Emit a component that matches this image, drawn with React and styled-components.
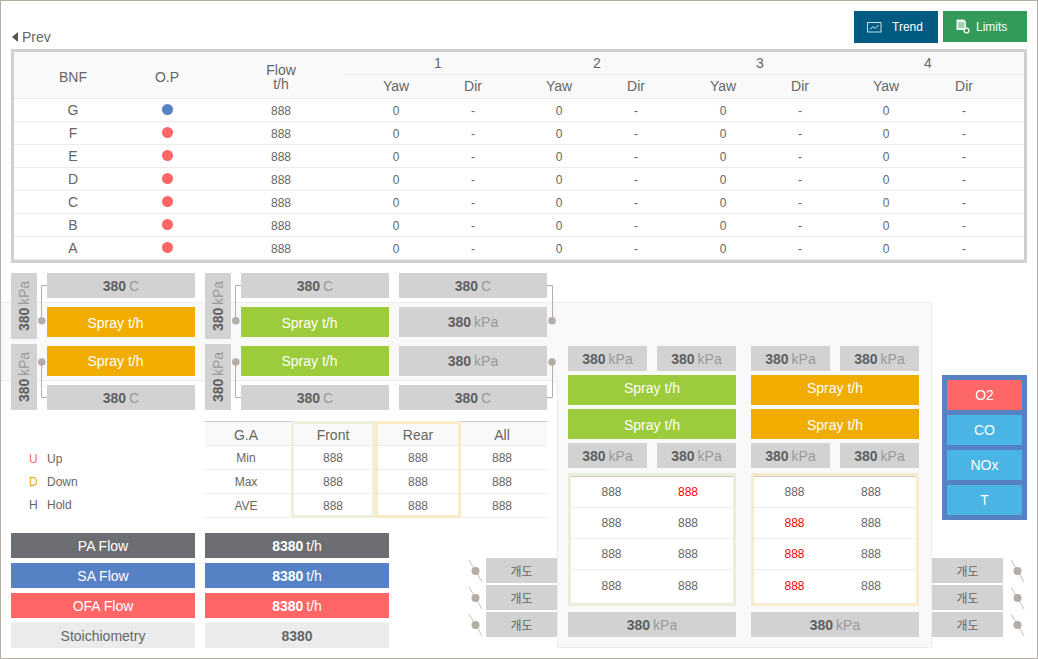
import React from "react";
import styled, { createGlobalStyle } from "styled-components";

const Global = createGlobalStyle`
  html, body { margin: 0; padding: 0; background: #fff; }
  body { font-family: "Liberation Sans", Arial, "Noto Sans CJK KR", sans-serif; color: #666; }
  * { box-sizing: border-box; }
`;

const C = {
  frame: "#b5aea6",
  box: "#d2d2d2",
  orange: "#f0ac00",
  green: "#9ccc3c",
  blue: "#5681c4",
  red: "#ff6666",
  sky: "#4ab4e4",
  dark: "#6d6e71",
  line: "#ececec",
  soft: "#f9f9f9",
};

const Page = styled.div`
  width: 1038px;
  height: 659px;
  border: 1px solid ${C.frame};
  overflow: hidden;
`;

const TopBar = styled.div`
  height: 48px;
  padding: 10px 10px 0;
  display: flex;
  align-items: flex-start;
`;
const Prev = styled.div`
  margin-top: 18px;
  padding-left: 1px;
  display: flex;
  align-items: center;
  gap: 4px;
  font-size: 14px;
  line-height: 16px;
  color: #666;
  &::before {
    content: "";
    border-style: solid;
    border-width: 5px 6px 5px 0;
    border-color: transparent #555 transparent transparent;
  }
`;
const Buttons = styled.div`
  margin-left: auto;
  display: flex;
  gap: 5px;
`;
const ActionButton = styled.div`
  width: 84px;
  height: ${(p) => p.$h}px;
  background: ${(p) => p.$bg};
  color: #fff;
  font-size: 12px;
  display: flex;
  align-items: center;
  padding-left: ${(p) => p.$pad}px;
  gap: ${(p) => p.$gap}px;
`;

const Table = styled.div`
  margin: 0 10px;
  border: 3px solid #d0d0d0;
  height: 214px;
`;
const cols = "118px 70px 158px 72px 82px 90px 64px 110px 44px 128px 28px 46px";
const Head = styled.div`
  display: grid;
  grid-template-columns: ${cols};
  grid-template-rows: 23px 23px;
  height: 47px;
  background: ${C.soft};
  border-bottom: 1px solid ${C.line};
  font-size: 14px;
`;
const HeadSpan = styled.div`
  grid-row: 1 / 3;
  display: flex;
  align-items: center;
  justify-content: center;
  text-align: center;
  line-height: 14px;
  padding-top: 4px;
`;
const GroupRow = styled.div`
  grid-column: 4 / -1;
  grid-row: 1;
  margin-left: -16px;
  display: grid;
  grid-template-columns: 188px 130px 196px 140px 26px;
  border-bottom: 1px solid ${C.line};
  align-items: center;
  text-align: center;
  height: 23px;
`;
const SubHead = styled.div`
  grid-row: 2;
  grid-column: ${(p) => p.$col};
  text-align: center;
  line-height: 23px;
`;
const Row = styled.div`
  display: grid;
  grid-template-columns: ${cols};
  height: 23px;
  padding-top: 1px;
  border-bottom: 1px solid ${C.line};
  align-items: center;
  text-align: center;
  font-size: 12px;
`;
const RowName = styled.div`
  font-size: 14px;
  margin-top: -2px;
`;
const Dot = styled.span`
  display: block;
  width: 11px;
  height: 11px;
  border-radius: 50%;
  margin: -3px auto 0;
  background: ${(p) => p.$c};
`;

const Lower = styled.div`
  margin-top: 10px;
  padding-left: 10px;
  display: flex;
  align-items: flex-start;
  height: 375px;
  background:
    linear-gradient(${C.line}, ${C.line}) 0 29px / 556px 1px no-repeat,
    linear-gradient(${C.line}, ${C.line}) 0 107px / 556px 1px no-repeat,
    linear-gradient(${C.soft}, ${C.soft}) 0 29px / 556px 79px no-repeat;
`;
const ColA = styled.div`
  width: 184px;
  margin-right: 10px;
`;
const ColB = styled.div`
  width: 352px;
`;
const Panel = styled.div`
  width: 375px;
  height: 346px;
  margin-top: 29px;
  padding: 43px 12px 0 11px;
  display: flex;
  gap: 15px;
  border: 1px solid ${C.line};
  border-left: 0;
  background:
    linear-gradient(${C.line}, ${C.line}) 0 78px / 1px 100% no-repeat,
    ${C.soft};
`;
const ColD = styled.div`
  width: 95px;
`;

const SprayGroup = styled.div`
  position: relative;
  display: flex;
  gap: 10px;
  height: 137px;
`;
const VStack = styled.div`
  width: 26px;
  display: flex;
  flex-direction: column;
  gap: 5px;
`;
const VBox = styled.div`
  height: 66px;
  background: ${C.box};
  display: flex;
  align-items: center;
  justify-content: center;
  writing-mode: vertical-rl;
  transform: rotate(180deg);
  font-size: 14px;
  color: #999;
  white-space: nowrap;
`;
const Stack = styled.div`
  width: 148px;
  display: flex;
  flex-direction: column;
  gap: 9px;
`;
const Metric = styled.div`
  height: ${(p) => p.$h || 25}px;
  width: ${(p) => (p.$w ? p.$w + "px" : "auto")};
  background: ${C.box};
  display: flex;
  align-items: center;
  justify-content: center;
  font-size: 14px;
  color: #999;
  white-space: nowrap;
`;
const Num = styled.b`
  color: #5f5f5f;
  margin-inline-end: 3px;
`;
const Spray = styled.div`
  height: 30px;
  background: ${(p) => p.$c};
  color: #fff;
  font-size: 14px;
  display: flex;
  align-items: center;
  justify-content: center;
  padding-bottom: ${(p) => p.$up || 0}px;
  padding-top: ${(p) => p.$down || 0}px;
  padding-right: ${(p) => p.$shift || 0}px;
`;
const Wires = styled.svg`
  position: absolute;
  left: 0;
  top: 0;
  overflow: visible;
  pointer-events: none;
`;

const Legend = styled.div`
  margin: 37px 0 0 18px;
  height: 86px;
  font-size: 12px;
`;
const LegendRow = styled.div`
  height: 23px;
  display: flex;
  align-items: center;
`;
const LegendKey = styled.span`
  width: 18px;
  font-size: 12px;
  color: ${(p) => p.$c};
`;

const FlowStack = styled.div`
  width: 184px;
  display: flex;
  flex-direction: column;
  gap: 5px;
`;
const Flow = styled.div`
  height: 25px;
  background: ${(p) => p.$bg};
  color: ${(p) => (p.$dim ? "#666" : "#fff")};
  font-size: 14px;
  display: flex;
  align-items: center;
  justify-content: center;
  white-space: pre;
`;
const FlowNum = styled.b`
  margin-inline-end: ${(p) => (p.$unit ? 3 : 0)}px;
`;

const GaTable = styled.div`
  margin-top: 11px;
  width: 342px;
  height: 97px;
  display: grid;
  grid-template-columns: 86px 84px 86px 86px;
`;
const GaCol = styled.div`
  position: relative;
  border-top: 1px solid #ccc;
  ${(p) =>
    p.$frame &&
    `&::after {
      content: "";
      position: absolute;
      inset: -1px 0 0;
      border: 3px solid ${p.$frame};
    }`}
`;
const GaHead = styled.div`
  height: 24px;
  font-size: 14px;
  text-align: center;
  line-height: 26px;
  padding-right: ${(p) => p.$pr || 0}px;
  background: ${C.soft};
  border-bottom: 1px solid ${C.line};
`;
const GaCell = styled.div`
  height: 24px;
  font-size: 12px;
  text-align: center;
  line-height: 24px;
  padding-right: ${(p) => p.$pr || 0}px;
  border-bottom: 1px solid ${C.line};
`;

const BottomB = styled.div`
  margin-top: 15px;
  display: flex;
  justify-content: space-between;
  align-items: flex-start;
`;
const GaugeList = styled.div`
  margin-top: ${(p) => p.$top || 0}px;
  display: flex;
  flex-direction: column;
  gap: 2px;
`;
const GaugeRow = styled.div`
  display: flex;
  align-items: center;
  gap: ${(p) => p.$gap}px;
`;
const GaugeBox = styled.div`
  width: 71px;
  height: 25px;
  background: ${C.box};
  font-size: 12px;
  color: #666;
  display: flex;
  align-items: center;
  justify-content: center;
  font-family: "Noto Sans CJK KR", sans-serif;
`;

const Side = styled.div`
  width: 168px;
  display: flex;
  flex-direction: column;
  gap: 4px;
`;
const Pair = styled.div`
  display: flex;
  justify-content: space-between;
`;
const Values = styled.div`
  margin: 1px 0 2px;
  height: 133px;
  border: 3px solid ${(p) => p.$c};
  background: #fff;
`;
const ValuesInner = styled.div`
  border-top: 1px solid #ccc;
`;
const ValueRow = styled.div`
  height: 31px;
  display: grid;
  grid-template-columns: 81px 72px;
  align-items: center;
  text-align: center;
  font-size: 12px;
  border-bottom: 1px solid ${C.line};
  &:last-child { border-bottom: 0; }
`;
const Val = styled.span`
  color: ${(p) => (p.$red ? "#ff0000" : "#666")};
`;

const GasBox = styled.div`
  margin: 102px 0 38px 10px;
  width: 85px;
  height: 145px;
  padding: 5px;
  background: ${C.blue};
  display: flex;
  flex-direction: column;
  gap: 5px;
`;
const Gas = styled.div`
  height: 30px;
  background: ${(p) => p.$c};
  color: #fff;
  font-size: 14px;
  display: flex;
  align-items: center;
  justify-content: center;
`;

const Val380 = ({ unit }) => (
  <>
    <Num>380</Num>
    {unit}
  </>
);

const Group = ({ color, extra }) => (
  <SprayGroup>
    <VStack>
      <VBox><Val380 unit="kPa" /></VBox>
      <VBox><Val380 unit="kPa" /></VBox>
    </VStack>
    <Stack>
      <Metric><Val380 unit="C" /></Metric>
      <Spray $c={color} $down={1} $shift={11}>Spray t/h</Spray>
      <Spray $c={color} $shift={11}>Spray t/h</Spray>
      <Metric><Val380 unit="C" /></Metric>
    </Stack>
    {extra && (
      <Stack>
        <Metric><Val380 unit="C" /></Metric>
        <Metric $h={30}><Val380 unit="kPa" /></Metric>
        <Metric $h={30}><Val380 unit="kPa" /></Metric>
        <Metric><Val380 unit="C" /></Metric>
      </Stack>
    )}
    <Wires width="10" height="137">
      <g fill="none" stroke={C.frame}>
        <path d="M36 12.5H30.5V47.5" />
        <path d="M36 124.5H30.5V89" />
        {extra && <path d="M342 12.5H347.5V47.5" />}
        {extra && <path d="M342 124.5H347.5V89" />}
      </g>
      <g fill={C.frame}>
        <circle cx="30.8" cy="47.7" r="3.8" />
        <circle cx="30.8" cy="89" r="3.8" />
        {extra && <circle cx="347" cy="47.7" r="3.8" />}
        {extra && <circle cx="347" cy="89" r="3.8" />}
      </g>
    </Wires>
  </SprayGroup>
);

const PinIcon = () => (
  <svg width="16" height="24" viewBox="0 0 16 24">
    <path d="M2 1L15 23" stroke={C.frame} strokeWidth="0.8" fill="none" />
    <circle cx="8.5" cy="12" r="4" fill={C.frame} />
  </svg>
);

const Gauges = ({ right, top }) => (
  <GaugeList $top={top}>
    {[0, 1, 2].map((i) => (
      <GaugeRow key={i} $gap={right ? 6 : 3}>
        {!right && <PinIcon />}
        <GaugeBox>개도</GaugeBox>
        {right && <PinIcon />}
      </GaugeRow>
    ))}
  </GaugeList>
);

const TrendIcon = () => (
  <svg width="15" height="11" viewBox="0 0 15 11" fill="none" stroke="#fff">
    <rect x="0.5" y="0.5" width="13.5" height="9.5" strokeOpacity="0.8" />
    <path d="M3 7.5L6 4.5L8 6.5L11.5 3" strokeOpacity="0.9" />
  </svg>
);
const LimitsIcon = () => (
  <svg width="14" height="15" viewBox="0 0 14 15">
    <path d="M0.5 0.5H8L10 2.5V11H0.5Z" fill="#fff" fillOpacity="0.9" />
    <path d="M2 4H8.5M2 6H8.5M2 8H8.5" stroke="#339a5a" strokeWidth="0.8" />
    <circle cx="10.5" cy="11.5" r="2.4" fill="#339a5a" stroke="#fff" strokeWidth="1.3" />
  </svg>
);

const rows = ["G", "F", "E", "D", "C", "B", "A"];
const gaRows = [
  ["G.A", "Min", "Max", "AVE"],
  ["Front", "888", "888", "888"],
  ["Rear", "888", "888", "888"],
  ["All", "888", "888", "888"],
];
const leftVals = [[0, 1], [0, 0], [0, 0], [0, 0]];
const rightVals = [[0, 0], [1, 0], [1, 0], [1, 0]];

const PanelSide = ({ color, frame, vals }) => (
  <Side>
    <Pair>
      <Metric $w={79}><Val380 unit="kPa" /></Metric>
      <Metric $w={79}><Val380 unit="kPa" /></Metric>
    </Pair>
    <Spray $c={color} $up={4}>Spray t/h</Spray>
    <Spray $c={color} $down={1}>Spray t/h</Spray>
    <Pair>
      <Metric $w={79}><Val380 unit="kPa" /></Metric>
      <Metric $w={79}><Val380 unit="kPa" /></Metric>
    </Pair>
    <Values $c={frame}>
      <ValuesInner>
        {vals.map((r, i) => (
          <ValueRow key={i}>
            <Val $red={r[0]}>888</Val>
            <Val $red={r[1]}>888</Val>
          </ValueRow>
        ))}
      </ValuesInner>
    </Values>
    <Metric><Val380 unit="kPa" /></Metric>
  </Side>
);

export default function App() {
  return (
    <Page>
      <Global />
      <TopBar>
        <Prev>Prev</Prev>
        <Buttons>
          <ActionButton $bg="#005b82" $h={32} $pad={13} $gap={10}><TrendIcon />Trend</ActionButton>
          <ActionButton $bg="#339a5a" $h={31} $pad={13} $gap={6}><LimitsIcon />Limits</ActionButton>
        </Buttons>
      </TopBar>
      <Table>
        <Head>
          <HeadSpan>BNF</HeadSpan>
          <HeadSpan>O.P</HeadSpan>
          <HeadSpan>Flow<br />t/h</HeadSpan>
          <GroupRow>
            <span>1</span><span>2</span><span>3</span><span>4</span>
          </GroupRow>
          {["Yaw", "Dir", "Yaw", "Dir", "Yaw", "Dir", "Yaw", "Dir"].map((t, i) => (
            <SubHead key={i} $col={i + 4}>{t}</SubHead>
          ))}
        </Head>
        {rows.map((r, i) => (
          <Row key={r}>
            <RowName>{r}</RowName>
            <div><Dot $c={i === 0 ? C.blue : C.red} /></div>
            <div>888</div>
            <div>0</div><div>-</div>
            <div>0</div><div>-</div>
            <div>0</div><div>-</div>
            <div>0</div><div>-</div>
          </Row>
        ))}
      </Table>
      <Lower>
        <ColA>
          <Group color={C.orange} />
          <Legend>
            <LegendRow><LegendKey $c={C.red}>U</LegendKey>Up</LegendRow>
            <LegendRow><LegendKey $c={C.orange}>D</LegendKey>Down</LegendRow>
            <LegendRow><LegendKey $c="#666">H</LegendKey>Hold</LegendRow>
          </Legend>
          <FlowStack>
            <Flow $bg={C.dark}>PA Flow</Flow>
            <Flow $bg={C.blue}>SA Flow</Flow>
            <Flow $bg={C.red}>OFA Flow</Flow>
            <Flow $bg="#ebebeb" $dim>Stoichiometry</Flow>
          </FlowStack>
        </ColA>
        <ColB>
          <Group color={C.green} extra />
          <GaTable>
            {gaRows.map((col, i) => {
              const pr = i === 0 || i === 3 ? 4 : 0;
              return (
                <GaCol key={i} $frame={i === 1 ? "#ebf1da" : i === 2 ? "#faebc8" : undefined}>
                  <GaHead $pr={pr}>{col[0]}</GaHead>
                  {col.slice(1).map((v, j) => <GaCell key={j} $pr={pr}>{v}</GaCell>)}
                </GaCol>
              );
            })}
          </GaTable>
          <BottomB>
            <FlowStack>
              <Flow $bg={C.dark}><FlowNum $unit>8380</FlowNum>t/h</Flow>
              <Flow $bg={C.blue}><FlowNum $unit>8380</FlowNum>t/h</Flow>
              <Flow $bg={C.red}><FlowNum $unit>8380</FlowNum>t/h</Flow>
              <Flow $bg="#ebebeb" $dim><FlowNum>8380</FlowNum></Flow>
            </FlowStack>
            <Gauges top={25} />
          </BottomB>
        </ColB>
        <Panel>
          <PanelSide color={C.green} frame="#e8efd8" vals={leftVals} />
          <PanelSide color={C.orange} frame="#f7ebcf" vals={rightVals} />
        </Panel>
        <ColD>
          <GasBox>
            <Gas $c={C.red}>O2</Gas>
            <Gas $c={C.sky}>CO</Gas>
            <Gas $c={C.sky}>NOx</Gas>
            <Gas $c={C.sky}>T</Gas>
          </GasBox>
          <Gauges right />
        </ColD>
      </Lower>
    </Page>
  );
}
